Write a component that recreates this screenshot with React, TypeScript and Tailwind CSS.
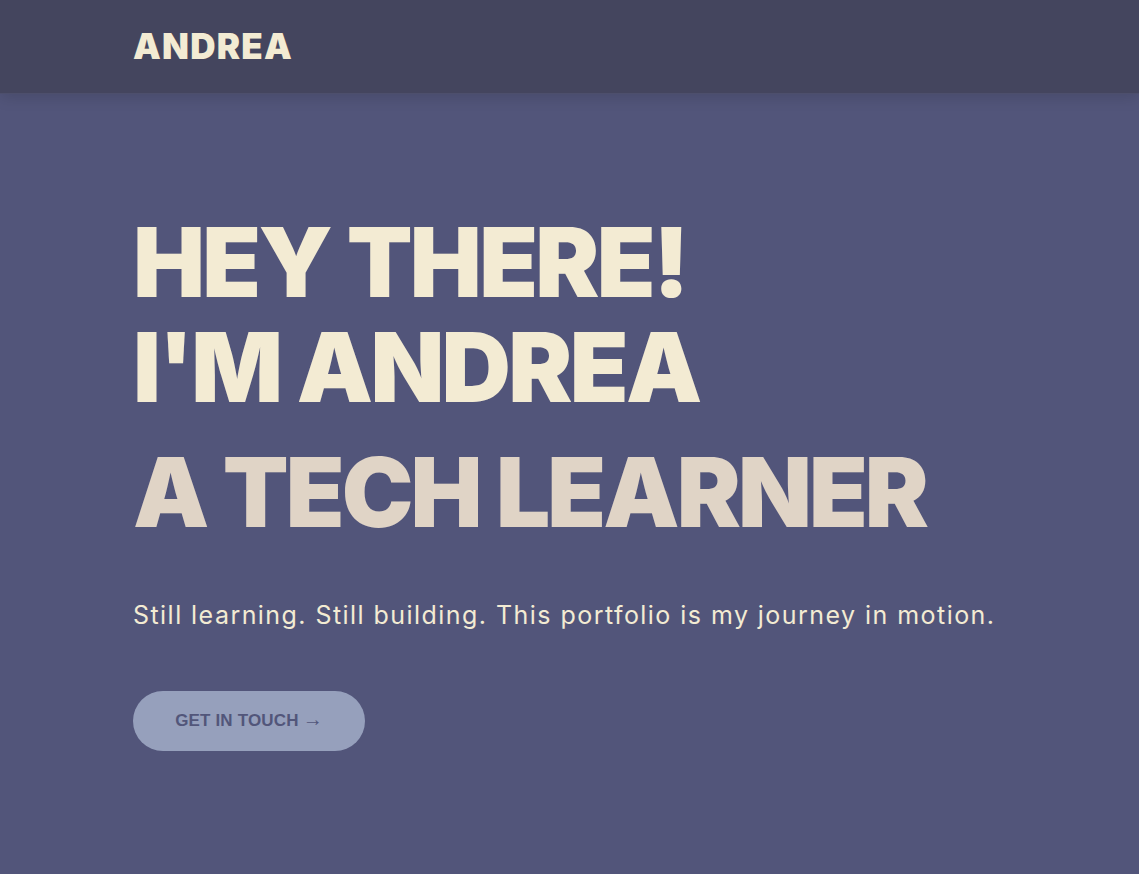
import React from 'react';

const App: React.FC = () => {
  return (
    <div className="min-h-[874px] bg-[#52557a] font-['Inter','Liberation_Sans',sans-serif]">
      {/* 顶部导航 */}
      <header className="h-[94px] bg-[#44455e] border-b border-[#4d4f6c] shadow-[0_4px_14px_rgba(0,0,0,0.12)] flex items-center px-[133px]">
        <span className="text-[35px] font-black tracking-[0.035em] text-[#f3ebd3] leading-none">ANDREA</span>
      </header>

      <main className="px-[133px] pt-[116px]">
        <h1 className="text-[96px] font-black leading-[105px] tracking-[-0.028em] text-[#f3ebd3]">
          <span className="block">HEY THERE!</span>
          <span className="block">I'M ANDREA</span>
        </h1>
        <h2 className="mt-[20px] text-[96px] font-black leading-[105px] tracking-[-0.03em] text-[#e0d4c6]">
          A TECH LEARNER
        </h2>

        <p className="mt-[53px] text-[25px] leading-[34px] text-[#f3ebd3] tracking-[0.058em]">
          Still learning. Still building. This portfolio is my journey in motion.
        </p>

        <button className="mt-[59px] w-[232px] h-[60px] rounded-full bg-[#96a0bc] text-[#52567a] font-['Liberation_Sans',Arial,sans-serif] font-bold text-[17px] tracking-[0.01em] flex items-center justify-center gap-1">
          GET IN TOUCH <span className="text-[20px] font-normal leading-none -translate-y-[2px]">→</span>
        </button>
      </main>
    </div>
  );
};

export default App;
